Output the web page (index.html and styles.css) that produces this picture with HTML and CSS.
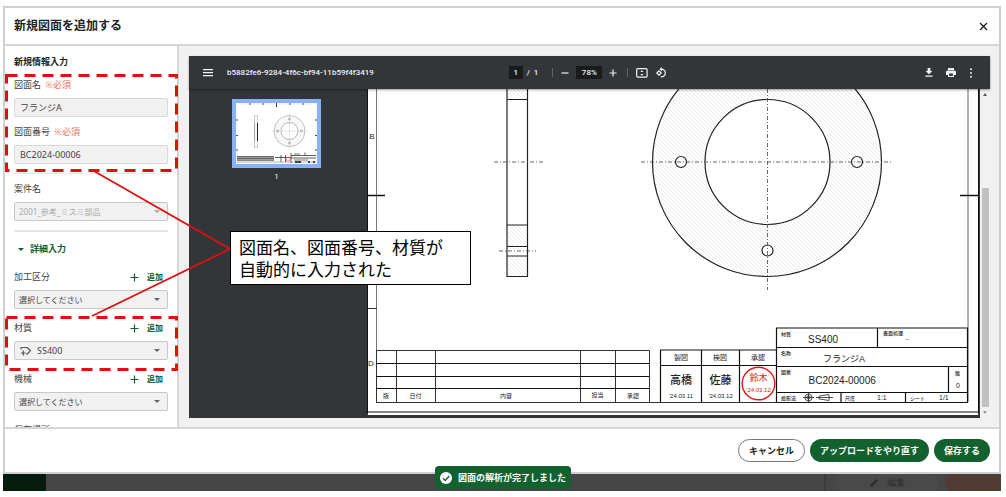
FILE: index.html
```html
<!DOCTYPE html>
<html lang="ja">
<head>
<meta charset="utf-8">
<title>新規図面を追加する</title>
<link rel="stylesheet" href="styles.css">
</head>
<body>
<div class="screen">
  <section class="modal" role="dialog" aria-labelledby="modal-title">
    <header class="modal-header">
      <h1 class="modal-title" id="modal-title">新規図面を追加する</h1>
      <button class="icon-button close" type="button" aria-label="閉じる">
        <svg width="9" height="9" viewBox="0 0 9 9"><path d="M1 1l7 7M8 1L1 8" fill="none" stroke="#222" stroke-width="1.4"/></svg>
      </button>
    </header>

    <div class="modal-body">
      <form class="sidebar">
        <h2 class="section-title">新規情報入力</h2>
        <div class="field">
          <label for="name">図面名 <span class="required">※必須</span></label>
          <input class="control" id="name" type="text" value="フランジA">
        </div>
        <div class="field">
          <label for="number">図面番号 <span class="required">※必須</span></label>
          <input class="control" id="number" type="text" value="BC2024-00006">
        </div>
        <hr class="rule">
        <div class="field">
          <label for="project">案件名</label>
          <div class="select-box">
            <select class="control select" id="project" disabled><option>2001_参考_ミスミ部品</option></select>
            <svg class="caret caret-muted" width="6" height="3" viewBox="0 0 6 3"><path d="M0 0h6L3 3z"/></svg>
          </div>
        </div>
        <hr class="rule rule-thick">
        <button class="disclosure" type="button">
          <svg width="6" height="3" viewBox="0 0 6 3"><path d="M0 0h6L3 3z" fill="#135d32"/></svg>
          詳細入力
        </button>
        <div class="field detail">
          <div class="label-row">
            <label for="process">加工区分</label>
            <button class="add" type="button"><svg width="9" height="9" viewBox="0 0 9 9"><path d="M4.500 0.500v8M0.500 4.500h8" stroke="#135d32" stroke-width="1.200"/></svg>追加</button>
          </div>
          <div class="select-box">
            <select class="control select" id="process"><option>選択してください</option></select>
            <svg class="caret" width="6" height="3" viewBox="0 0 6 3"><path d="M0 0h6L3 3z"/></svg>
          </div>
        </div>
        <div class="field detail">
          <div class="label-row">
            <label for="material">材質</label>
            <button class="add" type="button"><svg width="9" height="9" viewBox="0 0 9 9"><path d="M4.500 0.500v8M0.500 4.500h8" stroke="#135d32" stroke-width="1.200"/></svg>追加</button>
          </div>
          <div class="select-box">
            <svg class="read-mark" width="12" height="10" viewBox="0 0 12 10"><path d="M1 3.500V1.500H7.200L10.500 4.700L7.200 8H6M3.300 4.600v4.800M0.900 7h4.800" fill="none" stroke="#555" stroke-width="1.200" stroke-linejoin="round"/></svg>
            <select class="control select with-mark" id="material"><option>SS400</option></select>
            <svg class="caret" width="6" height="3" viewBox="0 0 6 3"><path d="M0 0h6L3 3z"/></svg>
          </div>
        </div>
        <div class="field detail">
          <div class="label-row">
            <label for="machine">機械</label>
            <button class="add" type="button"><svg width="9" height="9" viewBox="0 0 9 9"><path d="M4.500 0.500v8M0.500 4.500h8" stroke="#135d32" stroke-width="1.200"/></svg>追加</button>
          </div>
          <div class="select-box">
            <select class="control select" id="machine"><option>選択してください</option></select>
            <svg class="caret" width="6" height="3" viewBox="0 0 6 3"><path d="M0 0h6L3 3z"/></svg>
          </div>
        </div>
        <div class="field detail"><span class="label">保存場所</span></div>
      </form>

      <main class="viewer">
        <div class="toolbar">
          <div class="tools">
            <button class="icon-button" type="button" aria-label="メニュー"><svg width="10" height="8" viewBox="0 0 10 8"><path d="M0 .7h10M0 3.700h10M0 6.700h10" stroke="#f1f1f1" stroke-width="1.200"/></svg></button>
            <span class="file-name">b5882fe6-9284-4f6c-bf94-11b59f4f3419</span>
          </div>
          <div class="tools center">
            <div class="pages"><input class="tool-input page-input" aria-label="ページ" value="1"><span>/</span><span>1</span></div>
            <i class="separator"></i>
            <div class="zoom">
              <button class="icon-button" type="button" aria-label="縮小"><svg width="8" height="8" viewBox="0 0 8 8"><path d="M0.500 4h7" stroke="#f1f1f1" stroke-width="1.200"/></svg></button>
              <input class="tool-input zoom-input" aria-label="倍率" value="78%">
              <button class="icon-button" type="button" aria-label="拡大"><svg width="8" height="8" viewBox="0 0 8 8"><path d="M0.500 4h7M4 .5v7" stroke="#f1f1f1" stroke-width="1.200"/></svg></button>
            </div>
            <i class="separator"></i>
            <div class="fit">
              <button class="icon-button" type="button" aria-label="ページに合わせる"><svg width="12" height="10" viewBox="0 0 12 10"><rect x=".7" y=".7" width="10.400" height="8.400" rx="1" fill="none" stroke="#f1f1f1" stroke-width="1.200"/><path d="M4.300 3.900L5.900 2.200l1.600 1.700zM4.300 6.100l1.600 1.700 1.600-1.700z" fill="#f1f1f1"/></svg></button>
              <button class="icon-button" type="button" aria-label="回転"><svg width="12" height="12" viewBox="0 0 12 12"><path d="M4 3.800L6.200 6 4 8.200 1.800 6z" fill="none" stroke="#f1f1f1" stroke-width="1.200"/><path d="M5.800 2.200A3.900 3.900 0 1 1 5.800 9.900" fill="none" stroke="#f1f1f1" stroke-width="1.200"/><path d="M6.800 0v4.400L4.500 2.200z" fill="#f1f1f1"/></svg></button>
            </div>
          </div>
          <div class="tools right">
            <button class="icon-button" type="button" aria-label="ダウンロード"><svg width="8" height="9" viewBox="0 0 8 9"><path d="M2.600 0h2.800v3h2L4 6.200.6 3h2zM.4 7.400h7.200v1.300H.4z" fill="#f1f1f1"/></svg></button>
            <button class="icon-button" type="button" aria-label="印刷"><svg width="10" height="9" viewBox="0 0 10 9"><path d="M2 0h6v2H2zM1.500 2.500h7Q10 2.500 10 4v3H8v2H2V7H0V4Q0 2.500 1.500 2.500zM3.100 5.500V8h3.800V5.500z" fill="#f1f1f1" fill-rule="evenodd"/></svg></button>
            <button class="icon-button" type="button" aria-label="その他"><svg width="4" height="10" viewBox="0 0 4 10"><g fill="#f1f1f1"><circle cx="2" cy="1.300" r="1"/><circle cx="2" cy="5" r="1"/><circle cx="2" cy="8.700" r="1"/></g></svg></button>
          </div>
        </div>

        <div class="document">
          <aside class="thumbnails">
            <button class="thumbnail" type="button" aria-label="1ページ目">
              <svg viewBox="0 0 81 61" width="81" height="61">
                <rect width="81" height="61" fill="#fff"/>
                <path d="M14 0v2M27 0v2M40.500 0v4M54 0v2M67 0v2M0 17h2M0 32.500h2M0 47h2M79 17h2M79 32.500h2M79 47h2" stroke="#222"/>
                <path d="M1 1h79v59H1z" fill="none" stroke="#ddd" stroke-width=".5"/>
                <path d="M18.500 12.500h3v32h-3z" fill="#fafafa" stroke="#999" stroke-width=".5"/>
                <path d="M18.500 20v18" stroke="#888" stroke-width=".6"/><path d="M21.500 20v18" stroke="#222"/>
                <circle cx="53.500" cy="28" r="15.500" fill="#f8f8f8" stroke="#999" stroke-width=".6"/>
                <circle cx="53.500" cy="28" r="8.500" fill="#fff" stroke="#888" stroke-width=".6"/>
                <path d="M36 28h35M53.500 10v36" stroke="#ccc" stroke-width=".5"/>
                <g fill="none" stroke="#888" stroke-width=".6"><circle cx="41.600" cy="28" r="1"/><circle cx="65.400" cy="28" r="1"/><circle cx="53.500" cy="16" r="1"/><circle cx="53.500" cy="40" r="1"/></g>
                <path d="M1 53h37v4H1z" fill="#999"/><path d="M1 53.500h37M1 55.500h37M1 57.500h37" stroke="#555" stroke-width=".7"/>
                <path d="M1 59h79" stroke="#bbb"/>
                <path d="M39 54.500h16M45 52v7M49.500 52v7M55 50v10M55 52.500h25M55 55h25M69 49.500v3" stroke="#333" stroke-width=".8"/>
                <path d="M58 51h6M58 57h14" stroke="#777"/><path d="M59 59h6M72 59h2M77 59h2" stroke="#111" stroke-width="1.500"/>
                <circle cx="52" cy="56" r="2" fill="none" stroke="#e66" stroke-width=".7"/>
              </svg>
            </button>
            <span class="thumbnail-number">1</span>
          </aside>

          <svg class="drawing" viewBox="366 89 614 329" role="img" aria-label="フランジA 図面">
            <defs>
              <pattern id="hatch" width="4" height="4" patternUnits="userSpaceOnUse"><path d="M-1-1l6 6M-1 3l2 2M3-1l2 2" stroke="#e3e3e3" stroke-width=".7"/></pattern>
              <clipPath id="sheet"><path d="M366 89h614v329H366z"/></clipPath>
            </defs>
            <path d="M366 89h614v329H366z" fill="#323639"/>
            <path d="M368 89h610v326H368z" fill="#fff"/>
            <path d="M367.500 89v323.500M366 412h612M978.500 89v324" fill="none" stroke="#111"/>
            <path d="M376.500 89v313.500" stroke="#777"/>
            <path d="M968 89v313" stroke="#999" stroke-width="1.500"/>
            <path d="M376 402.500h592M368 308.500h9" stroke="#333" fill="none"/>
            <path d="M368 195.500h17M960 195.500h18" stroke="#111" stroke-width="1.300"/>
            <g class="margin-mark"><text x="372" y="139">B</text><text x="371" y="366">D</text></g>

            <path d="M507 89h20.500v10H507zM507 225h20.500v21H507zM507 256h20.500v20.500H507z" fill="url(#hatch)"/>
            <path d="M507 80v196.500h20.500V80M507 99.500h20.500M507 225h20.500M507 246.500h20.500M507 256h20.500" fill="none" stroke="#222" stroke-width="1.200" clip-path="url(#sheet)"/>

            <g clip-path="url(#sheet)" stroke="#222" stroke-width="1.200">
              <circle cx="767" cy="162" r="114.500" fill="url(#hatch)"/>
              <circle cx="767.500" cy="162" r="62.500" fill="#fff"/>
              <circle cx="681" cy="162" r="5.500" fill="#fff"/>
              <circle cx="857" cy="162" r="5.500" fill="#fff"/>
              <circle cx="767.500" cy="250.500" r="5.500" fill="#fff"/>
            </g>
            <path d="M494 162h50M499 251h37M641 162h251M767.500 89v201" fill="none" stroke="#555" stroke-width=".9" stroke-dasharray="4 2 1 2"/>

            <path d="M376.500 350.500h273v52M396.500 350v52M435.500 350v52M580.500 350v52M615.500 350v52M376.500 350v52" fill="none" stroke="#333"/>
            <path d="M376 363.500h273M376 376.500h273M376 388.500h273" stroke="#111" stroke-width="1.200"/>
            <g class="t6 mid"><text x="386" y="398">版</text><text x="415.500" y="398">日付</text><text x="506" y="398">内容</text><text x="597.500" y="397">担当</text><text x="633" y="398">承認</text></g>

            <path d="M660.500 402.500v-52.500h116M701.500 350v52M739.500 350v52M660.500 365.500h116" fill="none" stroke="#111" stroke-width="1.200"/>
            <g class="t7 mid"><text x="681" y="360">製図</text><text x="720" y="360">検図</text><text x="758" y="360">承認</text></g>
            <g class="t11 mid"><text x="681" y="384">高橋</text><text x="720.500" y="384">佐藤</text></g>
            <g class="t6 mid"><text x="681" y="398">'24.03.11</text><text x="720.500" y="398">'24.03.12</text></g>
            <circle cx="758.500" cy="383.500" r="16.300" fill="none" stroke="#e01818" stroke-width="1.400"/>
            <g class="stamp mid"><text class="t9" x="758.500" y="381">鈴木</text><text class="t6" x="758.500" y="392">'24.03.12</text></g>

            <path d="M776.500 328h191v74.500h-191zM776 347.500h192M776 366.500h192M776 392.500h192M877.500 328v19M948.500 366v26M841 392v10M905.500 392v10" fill="none" stroke="#111" stroke-width="1.200"/>
            <g class="t5"><text x="781" y="336">材質</text><text x="883" y="335">表面処理</text><text x="781" y="355">名称</text><text x="781" y="374">図番</text><text x="955" y="375">版</text><text x="781" y="400">投影法</text><text x="845" y="400">尺度</text><text x="910" y="400">シート</text></g>
            <g class="t10"><text x="808" y="343">SS400</text><text x="808.500" y="384">BC2024-00006</text></g>
            <text class="t9" x="823" y="362">フランジA</text>
            <g class="t7"><text x="906" y="341">-</text><text x="956" y="388">0</text><text x="877" y="400">1:1</text><text x="939" y="400">1/1</text></g>
            <g fill="none" stroke="#222" stroke-width=".8"><circle cx="808.500" cy="397.500" r="3.500"/><circle cx="808.500" cy="397.500" r="1.600"/><path d="M803 397.500h11M808.500 392.500v10M816 397.500h17M829 394.500v6l-10-1.600v-2.800z"/></g>
          </svg>

          <div class="scrollbar">
            <svg width="4" height="3" viewBox="0 0 4 3"><path d="M0 3h4L2 0z" fill="#555"/></svg>
            <div class="track"><div class="thumb"></div></div>
            <svg width="4" height="3" viewBox="0 0 4 3"><path d="M0 0h4L2 3z" fill="#999"/></svg>
          </div>
        </div>
      </main>
    </div>

    <footer class="modal-footer">
      <button class="button outline" type="button">キャンセル</button>
      <button class="button primary" type="button">アップロードをやり直す</button>
      <button class="button primary" type="button">保存する</button>
    </footer>
  </section>

  <div class="backdrop">
    <div class="backdrop-nav"></div>
    <div class="backdrop-actions">
      <span class="ghost"><svg width="10" height="10" viewBox="0 0 10 10"><path d="M1 9l.7-2.500L7.500 1 9 2.500 3.300 8.400z" fill="#2c2c2c"/></svg>編集</span>
      <span class="ghost ghost-danger"></span>
    </div>
  </div>

  <div class="toast" role="status">
    <svg width="12" height="12" viewBox="0 0 12 12"><circle cx="6" cy="6" r="6" fill="#fff"/><path d="M3 6.200l2.200 2.200L9.300 4" fill="none" stroke="#12612f" stroke-width="1.400"/></svg>
    図面の解析が完了しました
  </div>

  <svg class="annotation" width="240" height="380" viewBox="0 0 240 380">
    <g fill="none" stroke="#e01010">
      <path d="M6.500 75.500h170v95H6.500zM6.500 317.500h170v52H6.500z" stroke-width="3" stroke-dasharray="11 7"/>
      <path d="M93 170.500L230 249 92 316" stroke-width="1.800"/>
    </g>
  </svg>
  <p class="callout">図面名、図面番号、材質が<br>自動的に入力された</p>
</div>
</body>
</html>
```
FILE: styles.css
```css
* { box-sizing: border-box; }

body {
  margin: 0;
  background: #fff;
  color: #222;
  font: 9px/12px "Noto Sans", "Noto Sans CJK JP", sans-serif;
}

button, input, select { font: inherit; color: inherit; }
button { padding: 0; border: 0; background: none; }
svg { display: block; flex: none; }

.screen {
  position: relative;
  display: flex;
  flex-direction: column;
  height: 100vh;
  padding: 6px 5px 6px 3px;
}

.modal {
  flex: 1;
  min-height: 0;
  display: flex;
  flex-direction: column;
  border: 2px solid #d0d0d0;
  background: #fff;
}

.modal-header {
  display: flex;
  align-items: center;
  justify-content: space-between;
  height: 38px;
  padding: 0 11px 0 9px;
  border-bottom: 2px solid #d6d6d6;
}
.modal-title { margin: 0; font-size: 12px; line-height: 18px; font-weight: 700; }
.icon-button { display: flex; align-items: center; justify-content: center; }

.modal-body { flex: 1; min-height: 0; display: flex; }

.sidebar {
  flex: none;
  width: 174px;
  padding: 10px 9px 0;
  border-right: 2px solid #d6d6d6;
  overflow: hidden;
}
.section-title { margin: 0 0 11px; font-size: 9px; line-height: 12px; font-weight: 700; }
.field { display: flex; flex-direction: column; gap: 7px; margin-bottom: 9px; color: #444; }
.detail { margin-bottom: 13px; }
.required { margin-left: 2px; color: #f0715e; }
.label-row { display: flex; justify-content: space-between; padding-right: 5px; }
.add { display: flex; align-items: center; gap: 8px; color: #135d32; font-size: 8px; line-height: 12px; font-weight: 700; }

.control {
  width: 100%;
  height: 19px;
  padding: 0 5px;
  border: 1px solid #d9d9d9;
  border-radius: 2px;
  background: #f1f1f1;
  color: #444;
}
.select-box { position: relative; }
.select { display: block; appearance: none; border-color: #c8c8c8; padding: 0 4px; font-size: 8px; opacity: 1; }
.select:disabled { color: #aaa; }
.with-mark { padding-left: 22px; font-size: 9px; }
.caret { position: absolute; top: 8px; right: 8px; fill: #666; }
.caret-muted { fill: #aaa; }
.read-mark { position: absolute; top: 5px; left: 6px; }

.rule { height: 1px; margin: 0 0 9px; border: 0; background: #e6e6e6; }
.rule-thick { height: 2px; margin-bottom: 11px; }
.disclosure { display: flex; align-items: center; gap: 6px; margin: 0 0 16px; padding-left: 4px; color: #135d32; line-height: 12px; font-weight: 700; }

.viewer {
  flex: 1;
  min-width: 0;
  display: flex;
  flex-direction: column;
  padding: 10px 9px 9px 10px;
  background: #f1f1f1;
}
.toolbar {
  position: relative;
  display: grid;
  grid-template-columns: 1fr auto 1fr;
  align-items: center;
  height: 33px;
  padding: 0 17px 0 14px;
  background: #323639;
  color: #f1f1f1;
  box-shadow: 0 1px 2px #0006;
  font-family: Roboto, sans-serif;
  font-size: 8px;
  font-weight: 500;
}
.tools { display: flex; align-items: center; gap: 14px; }
.center { gap: 10px; }
.right { justify-content: flex-end; gap: 13px; }
.pages { display: flex; align-items: center; gap: 4px; margin-right: 4px; }
.zoom, .fit { display: flex; align-items: center; gap: 7px; }
.separator { width: 1px; height: 9px; margin-right: -2px; background: #62666a; }
.tool-input { height: 13px; padding: 0; border: 0; background: #191b1c; color: #f1f1f1; text-align: center; }
.page-input { width: 14px; }
.zoom-input { width: 26px; }

.document { flex: 1; min-height: 0; display: flex; }
.thumbnails {
  flex: none;
  display: flex;
  flex-direction: column;
  align-items: center;
  gap: 3px;
  width: 177px;
  padding: 10px 2px 0 0;
  background: #323639;
  color: #f1f1f1;
  font-family: Roboto, sans-serif;
  font-size: 8px;
}
.thumbnail { border: 4px solid #8ab0f5; }
.drawing { flex: 1; min-width: 0; height: 100%; background: #323639; }
.drawing text { fill: #222; font-family: "Liberation Sans", "Noto Sans CJK JP", sans-serif; }
.drawing .mid { text-anchor: middle; }
.drawing .margin-mark text { font-size: 8px; text-anchor: middle; }
.t5 { font-size: 5px; font-weight: 500; }
.t6 { font-size: 6px; }
.t7 { font-size: 7px; }
.t9 { font-size: 9px; }
.t10 { font-size: 10px; }
.t11 { font-size: 11px; font-weight: 500; }
.drawing .stamp text { fill: #e01818; }

.scrollbar {
  flex: none;
  display: flex;
  flex-direction: column;
  align-items: center;
  gap: 4px;
  width: 10px;
  padding: 4px 0;
  background: #f1f1f1;
}
.track { flex: 1; width: 7px; padding-top: 88px; }
.thumb { height: 100%; background: #c1c1c1; }

.modal-footer {
  display: flex;
  align-items: center;
  justify-content: flex-end;
  gap: 5px;
  height: 45px;
  padding: 0 9px;
  border-top: 2px solid #d6d6d6;
}
.button { height: 23px; padding: 0 10px; border-radius: 12px; font-weight: 700; }
.outline { border: 1px solid #777; background: #fff; }
.primary { background: #12612f; color: #fff; }

.backdrop { flex: none; display: flex; justify-content: space-between; height: 17px; background: #464646; }
.backdrop-nav { width: 43px; background: #061c0e; }
.backdrop-actions { display: flex; gap: 6px; padding-left: 9px; border-left: 2px solid #3c3c3c; }
.ghost { display: flex; align-items: center; justify-content: center; gap: 8px; width: 104px; border-radius: 8px; background: #494949; color: #303030; }
.ghost-danger { width: 56px; background: #513c34; border-radius: 8px 0 0 8px; }

.toast {
  position: absolute;
  bottom: 8px;
  left: 50%;
  transform: translateX(-50%);
  display: flex;
  align-items: center;
  gap: 6px;
  height: 23px;
  padding: 0 5px;
  border-radius: 4px;
  background: #12612f;
  color: #fff;
  font-weight: 700;
  white-space: nowrap;
}

.annotation { position: absolute; top: 0; left: 0; pointer-events: none; }
.callout {
  position: absolute;
  top: 231px;
  left: 230px;
  width: 241px;
  margin: 0;
  padding: 4px 8px;
  border: 1px solid #000;
  background: #fff;
  color: #000;
  font: 17px/22px "Noto Sans CJK JP", sans-serif;
}
```
